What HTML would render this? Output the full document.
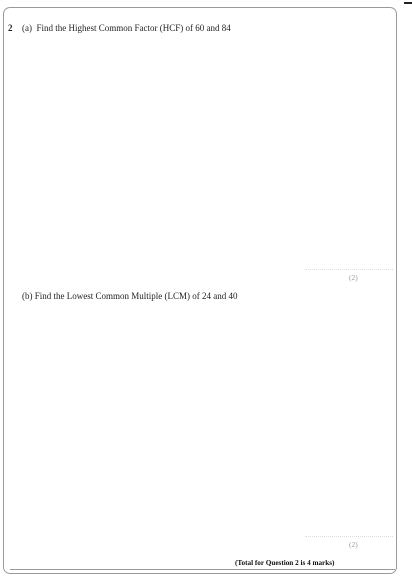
<!DOCTYPE html>
<html><head><style>
body{margin:0;width:412px;height:579px;background:#fff;position:relative;overflow:hidden;font-family:"Liberation Serif",serif;color:#222}
.box{position:absolute;left:3px;top:7px;width:392px;height:565px;border:1.5px solid #9a9a9a;border-radius:7px}
.inner{position:absolute;left:10px;top:569px;width:385px;border-top:1px solid #999}
.t{position:absolute;font-size:9px;white-space:nowrap}
.dl{position:absolute;border-top:1px dotted #ddd;width:88px;left:305px}
.m{position:absolute;font-size:7.5px;color:#999}
</style></head><body>
<div style="position:absolute;left:404px;top:2px;width:8px;height:2px;background:#222"></div>
<div class="box"></div>
<div class="inner"></div>
<div class="t" style="left:8px;top:23px"><b>2</b></div>
<div class="t" style="left:22px;top:23px">(a)&nbsp; Find the Highest Common Factor (HCF) of 60 and 84</div>
<div class="dl" style="top:269px"></div>
<div class="m" style="left:349px;top:273px">(2)</div>
<div class="t" style="left:22px;top:291px">(b) Find the Lowest Common Multiple (LCM) of 24 and 40</div>
<div class="dl" style="top:536px"></div>
<div class="m" style="left:349px;top:540px">(2)</div>
<div class="t" style="left:235px;top:559px;font-size:7.2px;font-weight:bold;color:#111">(Total for Question 2 is 4 marks)</div>
</body></html>
